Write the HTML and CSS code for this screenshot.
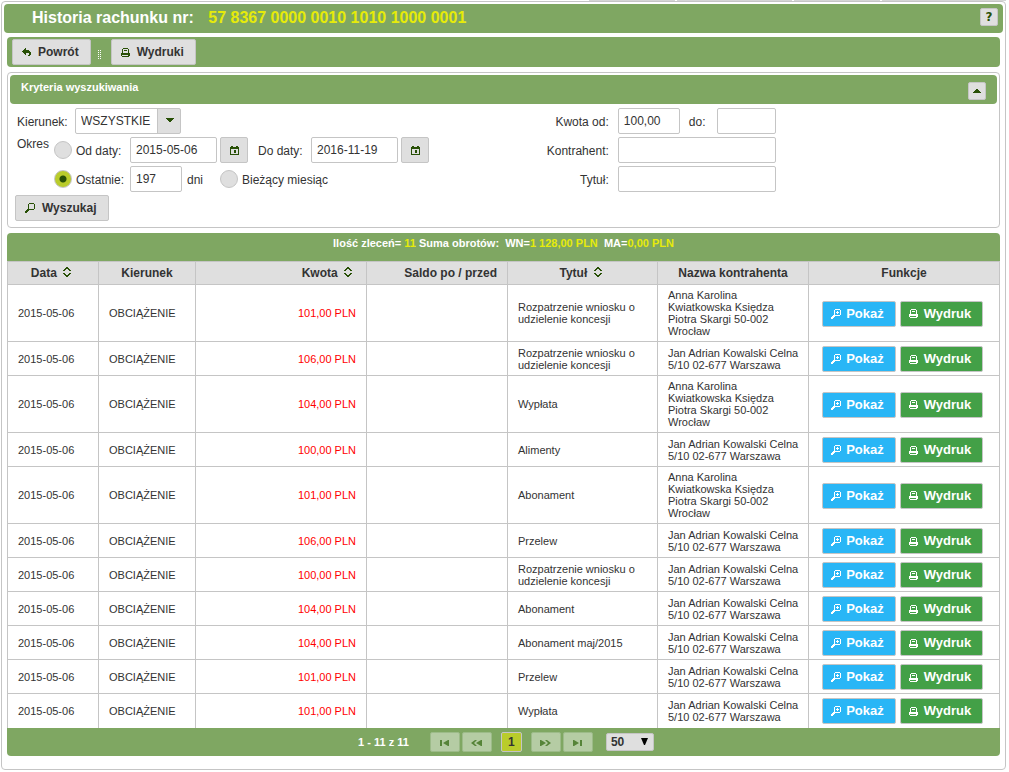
FILE: index.html
```html
<!DOCTYPE html>
<html lang="pl">
<head>
<meta charset="utf-8">
<title>Historia rachunku</title>
<link rel="stylesheet" href="styles.css">
</head>
<body>
<svg class="sprite" aria-hidden="true">
  <symbol id="i-back" viewBox="0 0 9 9"><path d="M3 0h1v2h3v1h1v1h1v3h-1v1h-2v-1h1v-2h-3v2h-1v-1h-1v-1h-1v-1h-1v-1h1v-1h1v-1h1z"/></symbol>
  <symbol id="i-print" viewBox="0 0 9 9"><path fill-rule="evenodd" d="M2 0h5v1h1v4h1v3h-1v1h-7v-1h-1v-3h1v-4h1zM2 1h5v4h-5zM3 2h3v1h-3zM1 7h6v1h-6z"/></symbol>
  <symbol id="i-search" viewBox="0 0 10 10"><path fill-rule="evenodd" d="M4 0h5v1h1v5h-1v1h-5v1h-1v1h-1v1h-2v-2h1v-1h1v-1h1v-5h1zM4 1v5h5v-5z"/></symbol>
  <symbol id="i-zoom" viewBox="0 0 10 10"><path fill-rule="evenodd" d="M4 0h5v1h1v5h-1v1h-5v1h-1v1h-1v1h-2v-2h1v-1h1v-1h1v-5h1zM4 1v5h5v-5zM6 2h1v1h1v1h-1v1h-1v-1h-1v-1h1z"/></symbol>
  <symbol id="i-cal" viewBox="0 0 9 9"><path fill-rule="evenodd" d="M1 0h2v1h3v-1h2v1h1v8h-9v-8h1zM1 3v5h7v-5zM4 4h2v3h-2z"/></symbol>
  <symbol id="i-down" viewBox="0 0 8 4"><path d="M0 0h8v1h-1v1h-1v1h-1v1h-2v-1h-1v-1h-1v-1h-1z"/></symbol>
  <symbol id="i-up" viewBox="0 0 8 4"><path d="M0 4h8v-1h-1v-1h-1v-1h-1v-1h-2v1h-1v1h-1v1h-1z"/></symbol>
  <symbol id="i-sort" viewBox="0 0 8 10"><path d="M3 0h2v1h1v1h1v1h1v1h-2v-1h-1v-1h-2v1h-1v1h-2v-1h1v-1h1v-1h1zM3 10h2v-1h1v-1h1v-1h1v-1h-2v1h-1v1h-2v-1h-1v-1h-2v1h1v1h1v1h1z"/></symbol>
  <symbol id="i-first" viewBox="0 0 9 6"><path d="M0 0h2v6h-2zM9 0v6h-1l-5-3 5-3z"/></symbol>
  <symbol id="i-prev" viewBox="0 0 11 6"><path d="M4 0h2l-3 3 3 3h-2l-4-3zM11 0v6h-1l-5-3 5-3z"/></symbol>
  <symbol id="i-next" viewBox="0 0 11 6"><path d="M7 0h-2l3 3-3 3h2l4-3zM0 0v6h1l5-3-5-3z"/></symbol>
  <symbol id="i-last" viewBox="0 0 9 6"><path d="M7 0h2v6h-2zM0 0v6h1l5-3-5-3z"/></symbol>
</svg>

<div class="tabs"><span></span><span></span><span></span><span></span></div>
<main class="page">
  <header class="title">
    <h1>Historia rachunku nr: <span class="account">57 8367 0000 0010 1010 1000 0001</span></h1>
    <button class="square" type="button">?</button>
  </header>

  <div class="content">
    <div class="toolbar">
      <button class="btn" type="button"><svg class="i9"><use href="#i-back"/></svg>Powrót</button>
      <span class="grip"></span>
      <button class="btn" type="button"><svg class="i9"><use href="#i-print"/></svg>Wydruki</button>
    </div>

    <form class="criteria">
      <div class="criteria-head">
        <h2>Kryteria wyszukiwania</h2>
        <button class="square" type="button" aria-label="Zwiń"><svg class="arrow"><use href="#i-up"/></svg></button>
      </div>
      <div class="criteria-body">
        <div class="column">
          <div class="line">
            <label class="l-dir" for="dir">Kierunek:</label>
            <span class="select">
              <select id="dir"><option>WSZYSTKIE</option></select>
              <svg class="arrow"><use href="#i-down"/></svg>
            </span>
          </div>
          <div class="period" role="radiogroup" aria-labelledby="period">
            <span id="period" class="period-name">Okres</span>
            <div class="lines">
              <div class="line">
                <input type="radio" name="okres" id="r-range"><label class="l-radio" for="r-range">Od daty:</label>
                <input class="date" type="text" value="2015-05-06" aria-label="Od daty">
                <button class="btn cal" type="button" aria-label="Kalendarz od"><svg class="i9"><use href="#i-cal"/></svg></button>
                <label class="l-to" for="date-to">Do daty:</label>
                <input class="date" type="text" id="date-to" value="2016-11-19">
                <button class="btn cal" type="button" aria-label="Kalendarz do"><svg class="i9"><use href="#i-cal"/></svg></button>
              </div>
              <div class="line">
                <input type="radio" name="okres" id="r-last" checked><label class="l-radio" for="r-last">Ostatnie:</label>
                <input class="days" type="text" id="days" value="197">
                <label class="l-days" for="days">dni</label>
                <input type="radio" name="okres" id="r-month"><label class="l-radio" for="r-month">Bieżący miesiąc</label>
              </div>
            </div>
          </div>
          <div class="line"><button class="btn" type="submit"><svg class="i10"><use href="#i-search"/></svg>Wyszukaj</button></div>
        </div>
        <div class="column">
          <div class="line">
            <label class="l-right" for="a-from">Kwota od:</label>
            <input class="from" type="text" id="a-from" value="100,00">
            <label class="l-until" for="a-to">do:</label>
            <input class="until" type="text" id="a-to">
          </div>
          <div class="line"><label class="l-right" for="party">Kontrahent:</label><input class="wide" type="text" id="party"></div>
          <div class="line"><label class="l-right" for="subject">Tytuł:</label><input class="wide" type="text" id="subject"></div>
        </div>
      </div>
    </form>

    <section class="results">
      <div class="summary">Ilość zleceń= <b>11</b> Suma obrotów:&nbsp; WN=<b>1 128,00 PLN</b>&nbsp; MA=<b>0,00 PLN</b></div>
      <table>
        <colgroup><col class="c1"><col class="c2"><col class="c3"><col class="c4"><col class="c5"><col class="c6"><col class="c7"></colgroup>
        <thead>
          <tr><th>Data <svg class="sort"><use href="#i-sort"/></svg></th><th>Kierunek</th><th class="num">Kwota <svg class="sort"><use href="#i-sort"/></svg></th><th class="num">Saldo po / przed</th><th>Tytuł <svg class="sort"><use href="#i-sort"/></svg></th><th>Nazwa kontrahenta</th><th>Funkcje</th></tr>
        </thead>
        <tbody>
          <tr><td>2015-05-06</td><td>OBCIĄŻENIE</td><td class="num debit">101,00 PLN</td><td></td><td>Rozpatrzenie wniosku o udzielenie koncesji</td><td>Anna Karolina Kwiatkowska Księdza Piotra Skargi 50-002 Wrocław</td><td class="act"><button class="btn show" type="button"><svg class="i10"><use href="#i-zoom"/></svg>Pokaż</button><button class="btn print" type="button"><svg class="i9"><use href="#i-print"/></svg>Wydruk</button></td></tr>
          <tr><td>2015-05-06</td><td>OBCIĄŻENIE</td><td class="num debit">106,00 PLN</td><td></td><td>Rozpatrzenie wniosku o udzielenie koncesji</td><td>Jan Adrian Kowalski Celna 5/10 02-677 Warszawa</td><td class="act"><button class="btn show" type="button"><svg class="i10"><use href="#i-zoom"/></svg>Pokaż</button><button class="btn print" type="button"><svg class="i9"><use href="#i-print"/></svg>Wydruk</button></td></tr>
          <tr><td>2015-05-06</td><td>OBCIĄŻENIE</td><td class="num debit">104,00 PLN</td><td></td><td>Wypłata</td><td>Anna Karolina Kwiatkowska Księdza Piotra Skargi 50-002 Wrocław</td><td class="act"><button class="btn show" type="button"><svg class="i10"><use href="#i-zoom"/></svg>Pokaż</button><button class="btn print" type="button"><svg class="i9"><use href="#i-print"/></svg>Wydruk</button></td></tr>
          <tr><td>2015-05-06</td><td>OBCIĄŻENIE</td><td class="num debit">100,00 PLN</td><td></td><td>Alimenty</td><td>Jan Adrian Kowalski Celna 5/10 02-677 Warszawa</td><td class="act"><button class="btn show" type="button"><svg class="i10"><use href="#i-zoom"/></svg>Pokaż</button><button class="btn print" type="button"><svg class="i9"><use href="#i-print"/></svg>Wydruk</button></td></tr>
          <tr><td>2015-05-06</td><td>OBCIĄŻENIE</td><td class="num debit">101,00 PLN</td><td></td><td>Abonament</td><td>Anna Karolina Kwiatkowska Księdza Piotra Skargi 50-002 Wrocław</td><td class="act"><button class="btn show" type="button"><svg class="i10"><use href="#i-zoom"/></svg>Pokaż</button><button class="btn print" type="button"><svg class="i9"><use href="#i-print"/></svg>Wydruk</button></td></tr>
          <tr><td>2015-05-06</td><td>OBCIĄŻENIE</td><td class="num debit">106,00 PLN</td><td></td><td>Przelew</td><td>Jan Adrian Kowalski Celna 5/10 02-677 Warszawa</td><td class="act"><button class="btn show" type="button"><svg class="i10"><use href="#i-zoom"/></svg>Pokaż</button><button class="btn print" type="button"><svg class="i9"><use href="#i-print"/></svg>Wydruk</button></td></tr>
          <tr><td>2015-05-06</td><td>OBCIĄŻENIE</td><td class="num debit">100,00 PLN</td><td></td><td>Rozpatrzenie wniosku o udzielenie koncesji</td><td>Jan Adrian Kowalski Celna 5/10 02-677 Warszawa</td><td class="act"><button class="btn show" type="button"><svg class="i10"><use href="#i-zoom"/></svg>Pokaż</button><button class="btn print" type="button"><svg class="i9"><use href="#i-print"/></svg>Wydruk</button></td></tr>
          <tr><td>2015-05-06</td><td>OBCIĄŻENIE</td><td class="num debit">104,00 PLN</td><td></td><td>Abonament</td><td>Jan Adrian Kowalski Celna 5/10 02-677 Warszawa</td><td class="act"><button class="btn show" type="button"><svg class="i10"><use href="#i-zoom"/></svg>Pokaż</button><button class="btn print" type="button"><svg class="i9"><use href="#i-print"/></svg>Wydruk</button></td></tr>
          <tr><td>2015-05-06</td><td>OBCIĄŻENIE</td><td class="num debit">104,00 PLN</td><td></td><td>Abonament maj/2015</td><td>Jan Adrian Kowalski Celna 5/10 02-677 Warszawa</td><td class="act"><button class="btn show" type="button"><svg class="i10"><use href="#i-zoom"/></svg>Pokaż</button><button class="btn print" type="button"><svg class="i9"><use href="#i-print"/></svg>Wydruk</button></td></tr>
          <tr><td>2015-05-06</td><td>OBCIĄŻENIE</td><td class="num debit">101,00 PLN</td><td></td><td>Przelew</td><td>Jan Adrian Kowalski Celna 5/10 02-677 Warszawa</td><td class="act"><button class="btn show" type="button"><svg class="i10"><use href="#i-zoom"/></svg>Pokaż</button><button class="btn print" type="button"><svg class="i9"><use href="#i-print"/></svg>Wydruk</button></td></tr>
          <tr><td>2015-05-06</td><td>OBCIĄŻENIE</td><td class="num debit">101,00 PLN</td><td></td><td>Wypłata</td><td>Jan Adrian Kowalski Celna 5/10 02-677 Warszawa</td><td class="act"><button class="btn show" type="button"><svg class="i10"><use href="#i-zoom"/></svg>Pokaż</button><button class="btn print" type="button"><svg class="i9"><use href="#i-print"/></svg>Wydruk</button></td></tr>
        </tbody>
      </table>
      <nav class="pager">
        <span class="range">1 - 11 z 11</span>
        <span class="group">
          <button type="button" disabled aria-label="Pierwsza"><svg class="p9"><use href="#i-first"/></svg></button>
          <button type="button" disabled aria-label="Poprzednia"><svg class="p11"><use href="#i-prev"/></svg></button>
        </span>
        <button class="current" type="button">1</button>
        <span class="group">
          <button type="button" disabled aria-label="Następna"><svg class="p11"><use href="#i-next"/></svg></button>
          <button type="button" disabled aria-label="Ostatnia"><svg class="p9"><use href="#i-last"/></svg></button>
        </span>
        <span class="size">
          <select aria-label="Liczba wierszy"><option>50</option></select>
          <svg class="tri" viewBox="0 0 7 7"><path d="M0 0h7L4 7H3z"/></svg>
        </span>
      </nav>
    </section>
  </div>
</main>
</body>
</html>
```
FILE: styles.css
```css
:root {
  --green: #7fa762;
  --gray: #dfdfdf;
  --line: #c5c5c5;
  --dark: #285006;
  --yellow: #e6eb0a;
}
* { box-sizing: border-box; }
body {
  margin: 0;
  padding: 0 3px 0 1px;
  background: #fff;
  color: #333;
  font: 12px/14px "Liberation Sans", Arial, sans-serif;
}
h1, h2 { margin: 0; }
button, input, select { font: inherit; color: inherit; margin: 0; }
svg { fill: var(--dark); flex: none; shape-rendering: crispEdges; }
.sprite { position: absolute; width: 0; height: 0; }
.i9 { width: 9px; height: 9px; }
.i10 { width: 10px; height: 10px; }
.arrow { width: 8px; height: 4px; }

.tabs {
  display: flex;
  justify-content: flex-end;
  gap: 2px;
  height: 1px;
}
.tabs span { width: 86px; background: #d5d5d5; }
.tabs span:nth-child(2) { width: 115px; }
.tabs span:nth-child(4) { width: 124px; }

.page {
  border: 1px solid var(--line);
  border-radius: 4px;
  padding: 2px 2px 13px;
}
.title {
  display: flex;
  align-items: flex-start;
  justify-content: space-between;
  padding: 4px 5px 4px 28px;
  min-height: 29px;
  background: var(--green);
  border-radius: 4px;
}
.title h1 {
  font-size: 16px;
  line-height: 20px;
  color: #fff;
}
.account { color: var(--yellow); margin-left: 10px; }
.square {
  display: flex;
  align-items: center;
  justify-content: center;
  width: 18px;
  height: 18px;
  padding: 0;
  background: var(--gray);
  border: 1px solid var(--line);
  border-radius: 2px;
  color: var(--dark);
  font-family: "DejaVu Sans", sans-serif;
  font-weight: bold;
}
.content {
  padding: 4px 3px 0;
  display: flex;
  flex-direction: column;
  gap: 5px;
}
.toolbar {
  display: flex;
  align-items: center;
  padding: 2px 5px;
  background: var(--green);
  border-radius: 4px;
}
.grip {
  width: 4px;
  height: 9px;
  margin: 4px 10px 0 6px;
  background: conic-gradient(#fff 0 25%, transparent 0) 0 0 / 2px 2px;
}
.btn {
  display: inline-flex;
  align-items: center;
  justify-content: center;
  gap: 7px;
  height: 26px;
  padding: 0 12px 0 9px;
  background: var(--gray);
  border: 1px solid var(--line);
  border-radius: 2px;
  font-weight: bold;
}
.toolbar .btn { padding-right: 11px; }

.criteria {
  border: 1px solid var(--line);
  border-radius: 4px;
  padding: 2px 2px 6px;
}
.criteria-head {
  display: flex;
  align-items: flex-start;
  justify-content: space-between;
  padding: 5px 11px 0;
  height: 29px;
  background: var(--green);
  border-radius: 4px;
}
.criteria-head h2 { font-size: 11px; line-height: 14px; color: #fff; }
.criteria-head .square { margin-top: 2px; }
.criteria-body {
  display: grid;
  grid-template-columns: 53fr 47fr;
  padding: 4px 5px 0;
}
.column, .lines { display: flex; flex-direction: column; gap: 3px; }
.line { display: flex; align-items: center; height: 26px; }
.line label { padding-top: 2px; }
.l-dir { width: 60px; padding-left: 2px; }
.period { display: flex; }
.period-name { width: 39px; padding-left: 2px; }
.l-radio { min-width: 58px; padding-left: 4px; }
.l-to { width: 63px; padding-left: 10px; }
.l-days { width: 38px; padding-left: 5px; }
.l-right { width: 76px; margin-right: 9px; text-align: right; }
.l-until { width: 37px; padding-left: 9px; }
input[type="text"] {
  height: 26px;
  padding: 0 5px;
  background: #fff;
  border: 1px solid var(--line);
  border-radius: 2px;
}
input.date { width: 87px; }
input.days { width: 52px; }
input.from { width: 62px; }
input.until { width: 59px; }
input.wide { width: 158px; }
.cal { width: 28px; padding: 0; margin-left: 3px; }
input[type="radio"] {
  appearance: none;
  flex: none;
  width: 18px;
  height: 18px;
  background: var(--gray);
  border: 1px solid var(--line);
  border-radius: 50%;
}
input[type="radio"]:checked {
  background: radial-gradient(circle, var(--dark) 0 3px, #b9cc2b 4px);
}
.select, .size { display: inline-grid; align-items: center; }
.select > *, .size > * { grid-area: 1 / 1; }
.select svg, .size svg { justify-self: end; pointer-events: none; }
.select select {
  appearance: none;
  width: 106px;
  height: 26px;
  padding: 0 24px 0 5px;
  border: 1px solid var(--line);
  border-radius: 2px;
  background: linear-gradient(to left, var(--gray) 22px, var(--line) 22px 23px, #fff 23px);
}
.select svg { margin: 0 7px 2px 0; }

.summary {
  padding: 3px 0 11px;
  background: var(--green);
  border-radius: 4px 4px 0 0;
  color: #fff;
  font-size: 11px;
  font-weight: bold;
  text-align: center;
}
.summary b { color: var(--yellow); }
table {
  width: 100%;
  table-layout: fixed;
  border-collapse: collapse;
  font-size: 11px;
  line-height: 12px;
}
.c1 { width: 91px; }
.c2 { width: 97px; }
.c3 { width: 171px; }
.c4 { width: 141px; }
.c5 { width: 150px; }
.c6 { width: 151px; }
.c7 { width: 191px; }
th, td { border: 1px solid var(--line); padding: 4px 10px; text-align: left; }
td { padding-right: 8px; }
tbody tr { height: 34px; }
th {
  height: 23px;
  background: var(--gray);
  font-size: 12px;
  line-height: 14px;
  text-align: center;
}
tbody tr:last-child td { border-bottom: 0; }
th.num, td.num { padding-right: 10px; text-align: right; }
td.debit { color: #f00; }
.sort { width: 8px; height: 10px; margin: 0 4px 0 3px; }
td.act { padding: 4px 0 3px 13px; white-space: nowrap; }
.act .btn { vertical-align: top; color: #fff; font-size: 13px; }
.act svg { fill: #fff; }
.act .show { width: 74px; padding: 0 3px 0 0; gap: 5px; background: #29b6f6; }
.act .print { width: 83px; padding: 0 3px 0 0; gap: 6px; margin-left: 4px; background: #43a047; }

.pager {
  display: flex;
  align-items: center;
  justify-content: center;
  gap: 9px;
  height: 28px;
  padding-left: 5px;
  background: var(--green);
  border-radius: 0 0 4px 4px;
}
.range { margin-right: 12px; color: #fff; font-size: 11px; font-weight: bold; }
.group { display: flex; gap: 2px; }
.pager button {
  display: flex;
  align-items: center;
  justify-content: center;
  width: 30px;
  height: 20px;
  padding: 2px 0 0;
  background: #b5cca4;
  border: 1px solid #9cbb88;
  border-radius: 2px;
}
.pager button svg { fill: #568438; shape-rendering: auto; }
.pager .current {
  width: 21px;
  padding: 0;
  background: #b9cc2b;
  border-color: var(--line);
  font-weight: bold;
}
.p9 { width: 9px; height: 6px; }
.p11 { width: 11px; height: 6px; }
.size { margin-left: 4px; }
.size select {
  appearance: none;
  width: 48px;
  height: 18px;
  padding: 0 18px 0 4px;
  background: var(--gray);
  border: 1px solid var(--line);
  border-radius: 2px;
  font-weight: bold;
}
.size svg { width: 7px; height: 7px; margin-right: 6px; fill: #000; shape-rendering: auto; }
```
